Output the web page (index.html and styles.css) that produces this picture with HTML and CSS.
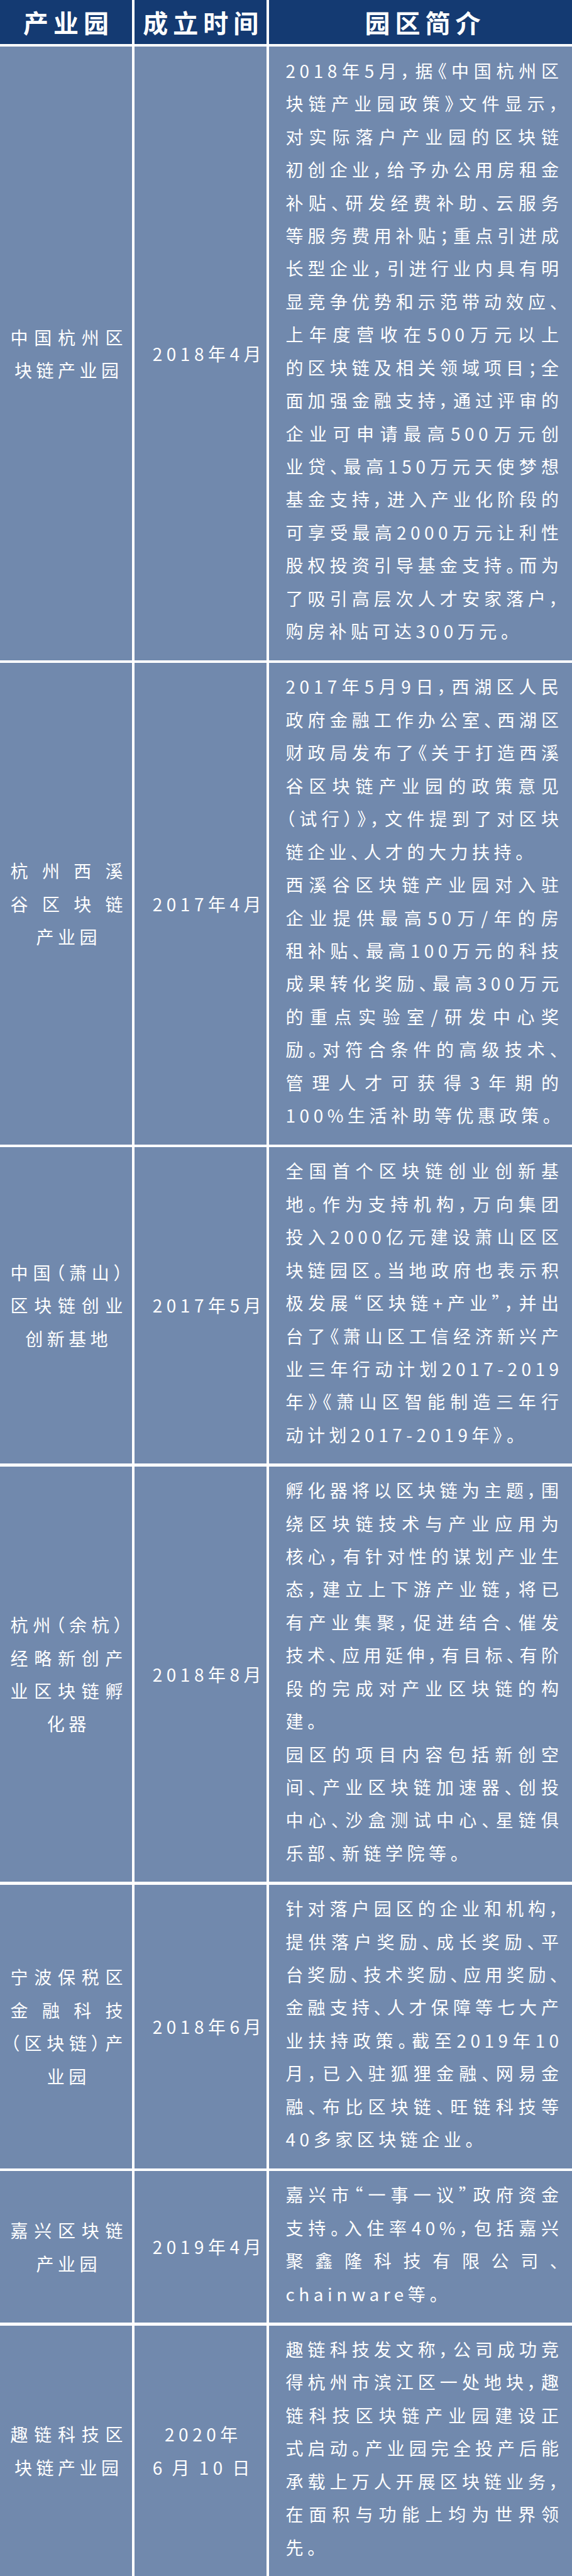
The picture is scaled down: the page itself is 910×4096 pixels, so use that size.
FILE: index.html
```html
<!DOCTYPE html>
<html lang="zh-CN">
<head>
<meta charset="utf-8">
<title>区块链产业园</title>
<link rel="stylesheet" href="styles.css">
</head>
<body>
<div class="table">
  <div class="th">产业园</div>
  <div class="th">成立时间</div>
  <div class="th">园区简介</div>

  <div class="cell name">
    <span class="ln j">中国杭州区</span>
    <span class="ln c">块链产业园</span>
  </div>
  <div class="cell date"><span class="ln c">2018年4月</span></div>
  <div class="cell desc">
    <span class="ln j">2018年5月，据《中国杭州区</span>
    <span class="ln j">块链产业园政策》文件显示，</span>
    <span class="ln j">对实际落户产业园的区块链</span>
    <span class="ln j">初创企业，给予办公用房租金</span>
    <span class="ln j">补贴、研发经费补助、云服务</span>
    <span class="ln j">等服务费用补贴；重点引进成</span>
    <span class="ln j">长型企业，引进行业内具有明</span>
    <span class="ln j">显竞争优势和示范带动效应、</span>
    <span class="ln j">上年度营收在500万元以上</span>
    <span class="ln j">的区块链及相关领域项目；全</span>
    <span class="ln j">面加强金融支持，通过评审的</span>
    <span class="ln j">企业可申请最高500万元创</span>
    <span class="ln j">业贷、最高150万元天使梦想</span>
    <span class="ln j">基金支持，进入产业化阶段的</span>
    <span class="ln j">可享受最高2000万元让利性</span>
    <span class="ln j">股权投资引导基金支持。而为</span>
    <span class="ln j">了吸引高层次人才安家落户，</span>
    <span class="ln e">购房补贴可达300万元。</span>
  </div>

  <div class="cell name">
    <span class="ln j">杭州西溪</span>
    <span class="ln j">谷区块链</span>
    <span class="ln c">产业园</span>
  </div>
  <div class="cell date"><span class="ln c">2017年4月</span></div>
  <div class="cell desc">
    <span class="ln j">2017年5月9日，西湖区人民</span>
    <span class="ln j">政府金融工作办公室、西湖区</span>
    <span class="ln j">财政局发布了《关于打造西溪</span>
    <span class="ln j">谷区块链产业园的政策意见</span>
    <span class="ln j">（试行）》，文件提到了对区块</span>
    <span class="ln e">链企业、人才的大力扶持。</span>
    <span class="ln j">西溪谷区块链产业园对入驻</span>
    <span class="ln j">企业提供最高50万/年的房</span>
    <span class="ln j">租补贴、最高100万元的科技</span>
    <span class="ln j">成果转化奖励、最高300万元</span>
    <span class="ln j">的重点实验室/研发中心奖</span>
    <span class="ln j">励。对符合条件的高级技术、</span>
    <span class="ln j">管理人才可获得3年期的</span>
    <span class="ln e">100%生活补助等优惠政策。</span>
  </div>

  <div class="cell name">
    <span class="ln j">中国（萧山）</span>
    <span class="ln j">区块链创业</span>
    <span class="ln c">创新基地</span>
  </div>
  <div class="cell date"><span class="ln c">2017年5月</span></div>
  <div class="cell desc">
    <span class="ln j">全国首个区块链创业创新基</span>
    <span class="ln j">地。作为支持机构，万向集团</span>
    <span class="ln j">投入2000亿元建设萧山区区</span>
    <span class="ln j">块链园区。当地政府也表示积</span>
    <span class="ln j">极发展“区块链+产业”，并出</span>
    <span class="ln j">台了《萧山区工信经济新兴产</span>
    <span class="ln j">业三年行动计划2017-2019</span>
    <span class="ln j">年》《萧山区智能制造三年行</span>
    <span class="ln e">动计划2017-2019年》。</span>
  </div>

  <div class="cell name">
    <span class="ln j">杭州（余杭）</span>
    <span class="ln j">经略新创产</span>
    <span class="ln j">业区块链孵</span>
    <span class="ln c">化器</span>
  </div>
  <div class="cell date"><span class="ln c">2018年8月</span></div>
  <div class="cell desc">
    <span class="ln j">孵化器将以区块链为主题，围</span>
    <span class="ln j">绕区块链技术与产业应用为</span>
    <span class="ln j">核心，有针对性的谋划产业生</span>
    <span class="ln j">态，建立上下游产业链，将已</span>
    <span class="ln j">有产业集聚，促进结合、催发</span>
    <span class="ln j">技术、应用延伸，有目标、有阶</span>
    <span class="ln j">段的完成对产业区块链的构</span>
    <span class="ln e">建。</span>
    <span class="ln j">园区的项目内容包括新创空</span>
    <span class="ln j">间、产业区块链加速器、创投</span>
    <span class="ln j">中心、沙盒测试中心、星链俱</span>
    <span class="ln e">乐部、新链学院等。</span>
  </div>

  <div class="cell name">
    <span class="ln j">宁波保税区</span>
    <span class="ln j">金融科技</span>
    <span class="ln j">（区块链）产</span>
    <span class="ln c">业园</span>
  </div>
  <div class="cell date"><span class="ln c">2018年6月</span></div>
  <div class="cell desc">
    <span class="ln j">针对落户园区的企业和机构，</span>
    <span class="ln j">提供落户奖励、成长奖励、平</span>
    <span class="ln j">台奖励、技术奖励、应用奖励、</span>
    <span class="ln j">金融支持、人才保障等七大产</span>
    <span class="ln j">业扶持政策。截至2019年10</span>
    <span class="ln j">月，已入驻狐狸金融、网易金</span>
    <span class="ln j">融、布比区块链、旺链科技等</span>
    <span class="ln e">40多家区块链企业。</span>
  </div>

  <div class="cell name">
    <span class="ln j">嘉兴区块链</span>
    <span class="ln c">产业园</span>
  </div>
  <div class="cell date"><span class="ln c">2019年4月</span></div>
  <div class="cell desc">
    <span class="ln j">嘉兴市“一事一议”政府资金</span>
    <span class="ln j">支持。入住率40%，包括嘉兴</span>
    <span class="ln j">聚鑫隆科技有限公司、</span>
    <span class="ln e">chainware等。</span>
  </div>

  <div class="cell name">
    <span class="ln j">趣链科技区</span>
    <span class="ln c">块链产业园</span>
  </div>
  <div class="cell date">
    <span class="ln c">2020年</span>
    <span class="ln j">6月10日</span>
  </div>
  <div class="cell desc">
    <span class="ln j">趣链科技发文称，公司成功竞</span>
    <span class="ln j">得杭州市滨江区一处地块，趣</span>
    <span class="ln j">链科技区块链产业园建设正</span>
    <span class="ln j">式启动。产业园完全投产后能</span>
    <span class="ln j">承载上万人开展区块链业务，</span>
    <span class="ln j">在面积与功能上均为世界领</span>
    <span class="ln e">先。</span>
  </div>
</div>
</body>
</html>
```

FILE: styles.css
```css
html, body {
  margin: 0;
  padding: 0;
  background: #ffffff;
}

body {
  font-family: "Noto Sans CJK SC", "Noto Sans", sans-serif;
  color: #ffffff;
}

.table {
  width: 910px;
  display: grid;
  grid-template-columns: 210px 209.6px 1fr;
  gap: 4.4px;
}

.th {
  height: 70px;
  background: #143a72;
  display: flex;
  align-items: center;
  justify-content: center;
  font-size: 40px;
  font-weight: 700;
  line-height: 70px;
  letter-spacing: 8px;
  padding-left: 8px;
}

.cell {
  background: #7189ad;
  font-size: 28px;
  line-height: 52.44px;
  letter-spacing: 6.5px;
  font-feature-settings: "palt" 1;
}

.name {
  display: flex;
  flex-direction: column;
  justify-content: center;
  padding: 0 7.9px 0 16.6px;
}

.date {
  display: flex;
  flex-direction: column;
  justify-content: center;
  padding: 0 20px 0 28.4px;
}

.desc {
  padding: 11.4px 21px 20px 26.2px;
}

.ln {
  display: block;
  white-space: nowrap;
}

.j {
  text-align: justify;
  text-align-last: justify;
}

.c {
  text-align: center;
}

.e {
  text-align: left;
}
```
